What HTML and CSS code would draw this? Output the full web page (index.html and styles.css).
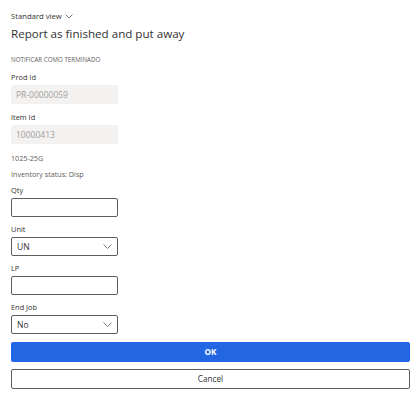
FILE: index.html
```html
<html>
<head>
<meta http-equiv="Content-type" content="text/html;charset=UTF-8">
<title>Report as finished and put away</title>
<link rel="stylesheet" href="styles.css">
</head>
<body>
  <div id="main">
    <div class="viewSelect">Standard view
      <svg class="chev" width="8" height="5" viewBox="0 0 8 5"><path d="M0.5 0.5 L4 4 L7.5 0.5" fill="none" stroke="#605e5c" stroke-width="0.8"/></svg>
    </div>
    <div class="title">Report as finished and put away</div>

    <div class="section">NOTIFICAR COMO TERMINADO</div>

    <div class="label">Prod Id</div>
    <div class="field readonly">PR-00000059</div>

    <div class="label">Item Id</div>
    <div class="field readonly">10000413</div>

    <div class="info first">1025-25G</div>
    <div class="info">Inventory status: Disp</div>

    <div class="label">Qty</div>
    <div class="field edit"></div>

    <div class="label">Unit</div>
    <div class="field edit combo">UN
      <svg class="chev" width="9" height="5" viewBox="0 0 9 5"><path d="M0.5 0.5 L4.5 4.5 L8.5 0.5" fill="none" stroke="#605e5c" stroke-width="0.8"/></svg>
    </div>

    <div class="label">LP</div>
    <div class="field edit"></div>

    <div class="label">End Job</div>
    <div class="field edit combo">No
      <svg class="chev" width="9" height="5" viewBox="0 0 9 5"><path d="M0.5 0.5 L4.5 4.5 L8.5 0.5" fill="none" stroke="#605e5c" stroke-width="0.8"/></svg>
    </div>

    <div class="button ok">OK</div>
    <div class="button cancel">Cancel</div>
  </div>
</body>
</html>
```

FILE: styles.css
```css
body{
    margin:0;
    background:white;
    font-family:"Open Sans", "Noto Sans", sans-serif;
    color:#323130;
}
#main{
    padding:10px 6px 0 11px;
}
.viewSelect{
    font-size:7.7px;
    height:13px;
    line-height:13px;
    display:flex;
    align-items:center;
    gap:3px;
}
.title{
    font-size:11.6px;
    line-height:17px;
    margin-top:2px;
}
.section{
    font-size:6.2px;
    line-height:10px;
    margin-top:13px;
    color:#605e5c;
}
.label{
    font-size:7.4px;
    line-height:11px;
    height:11px;
    margin-top:7.3px;
}
.info{
    font-size:7.2px;
    line-height:10px;
    margin-top:6px;
    color:#605e5c;
}
.info.first{
    margin-top:9px;
}
.info + .label{
    margin-top:6px;
}
.field{
    box-sizing:border-box;
    width:107px;
    height:19px;
    margin-top:2px;
    border-radius:2px;
    font-size:8.5px;
    line-height:19px;
    padding-left:5px;
}
.readonly{
    background:#f3f2f1;
    color:#a19f9d;
}
.edit{
    border:1px solid #605e5c;
    line-height:17px;
}
.combo{
    display:flex;
    justify-content:space-between;
    align-items:center;
    padding-right:5px;
}
.button{
    box-sizing:border-box;
    width:399px;
    height:20px;
    border-radius:2px;
    text-align:center;
    font-size:8.2px;
    line-height:20px;
}
.ok{
    margin-top:8px;
    background:#2266e3;
    color:white;
    font-weight:bold;
}
.cancel{
    margin-top:7px;
    border:1px solid #605e5c;
    line-height:18px;
}
```
